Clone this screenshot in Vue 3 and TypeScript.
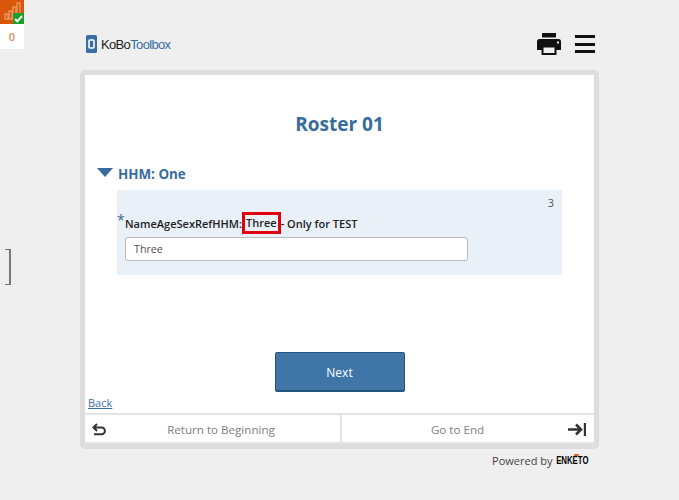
<script setup lang="ts">
const title = 'Roster 01'
const groupName = 'HHM: One'
const answer = 'Three'
</script>

<template>
  <div class="page">
    <div class="widget">
      <div class="widget__top">
        <svg class="widget__bars" width="20" height="20" viewBox="0 0 20 20">
          <g fill="none" stroke="#f0a070" stroke-width="1.2">
            <rect x="2" y="12" width="3" height="5" />
            <rect x="6" y="9" width="3" height="8" />
            <rect x="10" y="5" width="3" height="12" />
            <rect x="14" y="1" width="3" height="12" />
          </g>
        </svg>
        <span class="widget__check">
          <svg width="11" height="11" viewBox="0 0 11 11">
            <path d="M2 6l2.3 2.3L9 3" fill="none" stroke="#fff" stroke-width="2" />
          </svg>
        </span>
      </div>
      <div class="widget__count">0</div>
    </div>
    <div class="bracket"></div>

    <header class="header">
      <div class="logo">
        <svg width="11" height="18" viewBox="0 0 11 18">
          <rect width="11" height="18" rx="1.5" fill="#3a6ea5" />
          <rect x="3" y="5" width="5" height="8" rx="1" fill="none" stroke="#fff" stroke-width="1.6" />
        </svg>
        <span class="logo__text"><span class="logo__kobo">KoBo</span><span class="logo__toolbox">Toolbox</span></span>
      </div>
      <div class="header__actions">
        <svg width="24" height="22" viewBox="0 0 24 22">
          <path d="M5 0h14v4.500H5z" fill="#111" />
          <path fill-rule="evenodd" d="M2.500 6h19A2.500 2.500 0 0 1 24 8.500V17h-4.500v5h-15v-5H0V8.500A2.500 2.500 0 0 1 2.500 6zM6.500 14.500v5.500h11v-5.500zM20 8.500v2h2v-2z" fill="#111" />
        </svg>
        <div class="burger"><i></i><i></i><i></i></div>
      </div>
    </header>

    <main class="card">
      <h1 class="title">{{ title }}</h1>
      <div class="group">
        <span class="group__caret"></span>
        <h2 class="group__name">{{ groupName }}</h2>
      </div>
      <section class="question">
        <span class="question__number">3</span>
        <div class="question__label">
          <span class="question__required">*</span>
          <span>NameAgeSexRefHHM:</span>
          <span class="question__mark">{{ answer }}</span>
          <span>- Only for TEST</span>
        </div>
        <input class="question__input" :value="answer" />
      </section>
      <div class="actions">
        <button class="next" type="button">Next</button>
      </div>
      <a class="back" href="#">Back</a>
      <nav class="footer">
        <a class="footer__item footer__item--start" href="#">
          <svg class="footer__icon" width="14" height="13" viewBox="0 0 14 13">
            <path d="M5 1L1.500 4.500 5 8M2 4.500h7.500a3.300 3.300 0 0 1 0 6.800H2" fill="none" stroke="#333" stroke-width="2" />
          </svg>
          <span>Return to Beginning</span>
        </a>
        <a class="footer__item footer__item--end" href="#">
          <span>Go to End</span>
          <svg class="footer__icon footer__icon--end" width="18" height="13" viewBox="0 0 18 13">
            <path d="M0 6.500h12.500M8 1.500l5 5-5 5" fill="none" stroke="#333" stroke-width="2.600" />
            <path d="M15.800 0h2.200v13h-2.200z" fill="#333" />
          </svg>
        </a>
      </nav>
    </main>

    <div class="powered">
      <span>Powered by</span>
      <span class="powered__brand">ENKETO<i></i></span>
    </div>
  </div>
</template>

<style>
html, body {
  margin: 0;
  background: #efefef;
}
</style>

<style scoped>
.page {
  position: relative;
  width: 679px;
  height: 500px;
  overflow: hidden;
  background: #efefef;
  font-family: "Open Sans", "Liberation Sans", sans-serif;
}

.widget {
  position: absolute;
  left: 0;
  top: 0;
  width: 24px;
  height: 49px;
  background: #fff;
}

.widget__top {
  position: relative;
  height: 24px;
  background: #d9560a;
}

.widget__bars {
  position: absolute;
  left: 3px;
  top: 2px;
}

.widget__check {
  position: absolute;
  right: 0;
  bottom: 0;
  width: 11px;
  height: 11px;
  display: flex;
  background: #1c9e2c;
}

.widget__count {
  height: 25px;
  line-height: 25px;
  text-align: center;
  font-size: 11px;
  font-weight: 600;
  color: #e08a60;
}

.bracket {
  position: absolute;
  left: 5px;
  top: 249px;
  width: 4px;
  height: 34px;
  border: 1px solid #777;
  border-left: 0;
  border-right-width: 2px;
}

.header {
  height: 70px;
  display: flex;
  align-items: center;
  justify-content: space-between;
  padding: 18px 84px 0 86px;
  box-sizing: border-box;
}

.logo {
  display: flex;
  align-items: center;
  gap: 4px;
}

.logo__text {
  font-family: "Liberation Sans", sans-serif;
  font-size: 13px;
  letter-spacing: -0.65px;
}

.logo__kobo {
  color: #222;
}

.logo__toolbox {
  color: #3a6ea5;
}

.header__actions {
  display: flex;
  align-items: center;
  gap: 14px;
}

.burger {
  width: 20px;
  display: flex;
  flex-direction: column;
  gap: 4.5px;
}

.burger i {
  display: block;
  height: 3px;
  background: #111;
}

.card {
  width: 519px;
  height: 379px;
  margin-left: 80px;
  box-sizing: border-box;
  border: 5px solid #ddd;
  border-radius: 5px;
  background: #fff;
  display: flex;
  flex-direction: column;
}

.title {
  margin: 36px 0 0;
  text-align: center;
  font-size: 19px;
  line-height: 27px;
  font-weight: 700;
  color: #386c9c;
}

.group {
  display: flex;
  align-items: center;
  gap: 5px;
  margin: 26px 0 0 12px;
  height: 20px;
}

.group__caret {
  width: 0;
  height: 0;
  margin-top: -3px;
  border-left: 8px solid transparent;
  border-right: 8px solid transparent;
  border-top: 9px solid #386c9c;
}

.group__name {
  margin: 0;
  font-size: 13.4px;
  font-weight: 700;
  color: #386c9c;
}

.question {
  position: relative;
  width: 445px;
  height: 85px;
  margin: 6px 0 0 32px;
  padding: 22px 8px 0;
  box-sizing: border-box;
  background: #e9f0f7;
}

.question__number {
  position: absolute;
  right: 8px;
  top: 5px;
  font-size: 11px;
  color: #555;
}

.question__label {
  position: relative;
  display: flex;
  align-items: center;
  height: 22px;
  font-size: 11px;
  font-weight: 600;
  color: #222;
  white-space: nowrap;
}

.question__required {
  position: absolute;
  left: -8px;
  top: -2px;
  font-size: 14px;
  font-weight: 400;
  color: #386c9c;
}

.question__mark {
  padding: 0 1px;
  line-height: 16px;
  border: 3px solid #e00010;
}

.question__input {
  display: block;
  width: 343px;
  height: 24px;
  margin-top: 3px;
  padding: 0 8px;
  box-sizing: border-box;
  border: 1px solid #bbb;
  border-radius: 3px;
  background: #fff;
  font-family: inherit;
  font-size: 10.7px;
  color: #5b4a5a;
  outline: none;
}

.actions {
  display: flex;
  justify-content: center;
  margin-top: 77px;
}

.next {
  width: 130px;
  height: 40px;
  padding: 1px 0 0;
  border: 1px solid #23557f;
  border-bottom-width: 2px;
  border-radius: 2px;
  background: #3f75a7;
  color: #fff;
  font-family: inherit;
  font-size: 12px;
  font-weight: 500;
}

.back {
  margin: 3px 0 0 3px;
  font-size: 11px;
  line-height: 15px;
  color: #3a6ea5;
}

.footer {
  margin-top: auto;
  height: 31px;
  display: flex;
  border-top: 2px solid #e4e4e4;
  border-bottom: 2px solid #e4e4e4;
  box-sizing: border-box;
}

.footer__item {
  position: relative;
  flex: 1 1 0;
  display: flex;
  align-items: center;
  justify-content: center;
  box-sizing: border-box;
  padding-top: 2px;
  font-size: 11.6px;
  color: #808080;
  text-decoration: none;
}

.footer__item--start {
  flex: 0 0 255px;
  padding-left: 17px;
}

.footer__item--end {
  padding-right: 21px;
  border-left: 2px solid #e4e4e4;
}

.footer__icon {
  position: absolute;
  left: 7px;
  top: 8px;
}

.footer__icon--end {
  left: auto;
  right: 8px;
}

.powered {
  display: flex;
  justify-content: flex-end;
  align-items: center;
  gap: 3px;
  width: 588px;
  height: 22px;
  font-size: 11px;
  color: #444;
}

.powered__brand {
  position: relative;
  margin-left: -9px;
  font-family: "Liberation Sans", sans-serif;
  font-size: 10px;
  font-weight: 700;
  color: #000;
  transform: scaleX(0.78);
  transform-origin: right;
}

.powered__brand i {
  position: absolute;
  left: 23px;
  top: -1px;
  width: 6px;
  height: 2px;
  background: #e8602c;
}
</style>
